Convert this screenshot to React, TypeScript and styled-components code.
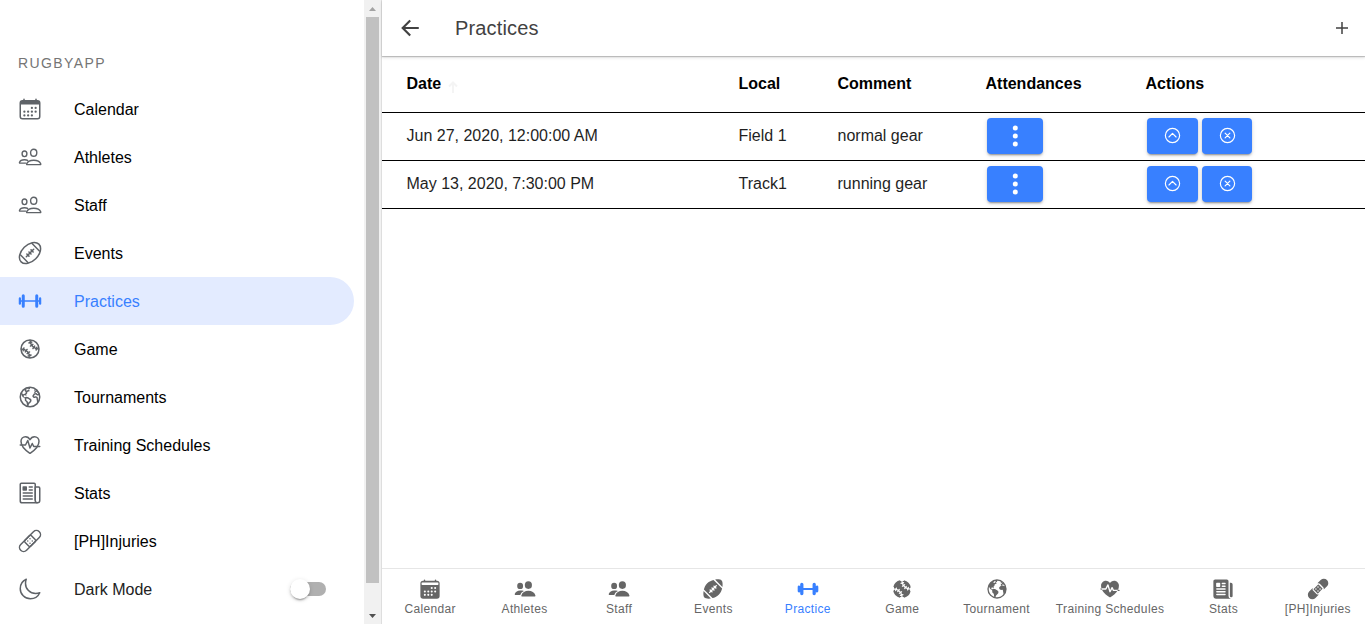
import React from 'react';
import styled, { createGlobalStyle } from 'styled-components';
import {
  IoAmericanFootballOutline, IoBarbellOutline, IoBaseballOutline,
  IoEarthOutline, IoFitnessOutline, IoNewspaperOutline, IoBandageOutline, IoMoonOutline,
  IoAmericanFootball, IoBarbell, IoBaseball, IoEarth, IoFitness, IoNewspaper, IoBandage,
  IoChevronUpCircleOutline, IoCloseCircleOutline,
} from 'react-icons/io5';

const BLUE = '#3880ff';

const GlobalStyle = createGlobalStyle`
  *, *::before, *::after { box-sizing: border-box; }
  body {
    margin: 0;
    background: #fff;
    color: #000;
    font-family: "Liberation Sans", Arial, sans-serif;
    font-size: 16px;
  }
`;

const Shell = styled.div`
  display: flex;
  height: 624px;
  overflow: hidden;
`;

const Sidebar = styled.aside`
  display: flex;
  width: 382px;
  flex: none;
  border-right: 1px solid #dedede;
`;

const Menu = styled.nav`
  flex: 1;
  padding: 40px 10px 0 0;
`;

const MenuHeader = styled.h1`
  margin: 0;
  height: 45px;
  padding-left: 18px;
  font-size: 14px;
  font-weight: 400;
  line-height: 46px;
  letter-spacing: 1.4px;
  color: #757575;
`;

const MenuItem = styled.a<{ $active?: boolean }>`
  display: flex;
  align-items: center;
  height: 48px;
  padding: 0 28px 0 18px;
  border-radius: 0 32px 32px 0;
  background: ${(p) => (p.$active ? '#e3ebff' : 'transparent')};
  color: ${(p) => (p.$active ? BLUE : '#000')};

  svg {
    flex: none;
    width: 24px;
    height: 24px;
    margin-right: 32px;
    color: ${(p) => (p.$active ? BLUE : '#5f6368')};
  }
`;

const ItemLabel = styled.span<{ $muted?: boolean }>`
  flex: 1;
  padding-top: 2px;
  line-height: 24px;
  color: ${(p) => (p.$muted ? '#222' : 'inherit')};
`;

const Toggle = styled.span`
  display: flex;
  align-items: center;
  width: 36px;
  height: 14px;
  border-radius: 14px;
  background: #b0b0b0;
`;

const Knob = styled.span`
  width: 20px;
  height: 20px;
  border-radius: 50%;
  background: #fff;
  box-shadow: 0 3px 1px -2px rgba(0, 0, 0, .2), 0 2px 2px 0 rgba(0, 0, 0, .14), 0 1px 5px 0 rgba(0, 0, 0, .12);
`;

const Scrollbar = styled.div`
  display: flex;
  flex-direction: column;
  align-items: center;
  width: 17px;
  background: #f1f1f1;
`;

const ScrollArrow = styled.span`
  display: flex;
  align-items: center;
  justify-content: center;
  width: 17px;
  height: 17px;
`;

const ScrollThumb = styled.span`
  width: 13px;
  height: 566px;
  margin-bottom: auto;
  background: #c1c1c1;
`;

const Page = styled.main`
  display: flex;
  flex: 1;
  flex-direction: column;
  min-width: 0;
`;

const Toolbar = styled.header`
  display: flex;
  align-items: center;
  flex: none;
  height: 56px;
  padding: 0 16px;
  color: #424242;
  box-shadow: 0 1px 1px rgba(0, 0, 0, .2), 0 2px 3px rgba(0, 0, 0, .1);
`;

const Title = styled.h2`
  flex: 1;
  margin: 0 0 0 33px;
  font-size: 20px;
  font-weight: 400;
  letter-spacing: .15px;
`;

const Content = styled.section`
  flex: 1;
`;

const Row = styled.div<{ $header?: boolean }>`
  display: grid;
  grid-template-columns: 332px 99px 148px 160px 1fr;
  height: ${(p) => (p.$header ? 57 : 48)}px;
  padding-left: 24.5px;
  border-bottom: 1px solid #000;
  font-weight: ${(p) => (p.$header ? 700 : 400)};
  color: ${(p) => (p.$header ? '#000' : '#1f1f1f')};
`;

const Cell = styled.div<{ $header?: boolean }>`
  display: flex;
  align-items: center;
  padding-bottom: ${(p) => (p.$header ? 0 : 2)}px;
  white-space: nowrap;
`;

const SortIcon = styled.svg`
  margin: 5px 0 0 7px;
`;

const ButtonCell = styled.div`
  display: flex;
  align-items: center;
  gap: 4px;
  padding: 0 0 2px 1.5px;
`;

const Button = styled.button<{ $width: number }>`
  display: flex;
  align-items: center;
  justify-content: center;
  width: ${(p) => p.$width}px;
  height: 36px;
  padding: 0;
  border: 0;
  border-radius: 4px;
  background: ${BLUE};
  color: #fff;
  box-shadow: 0 3px 1px -2px rgba(0, 0, 0, .2), 0 2px 2px 0 rgba(0, 0, 0, .14), 0 1px 5px 0 rgba(0, 0, 0, .12);
`;

const TabBar = styled.footer`
  display: flex;
  flex: none;
  height: 56px;
  padding-left: 1px;
  border-top: 1px solid #e6e6e6;
`;

const Tab = styled.a<{ $active?: boolean }>`
  display: flex;
  flex: 1;
  flex-direction: column;
  align-items: center;
  padding: 9px 12px 0;
  font-size: 12px;
  line-height: 14px;
  letter-spacing: .34px;
  white-space: nowrap;
  color: ${(p) => (p.$active ? BLUE : '#666')};

  svg {
    width: 22px;
    height: 22px;
    margin-bottom: 2px;
  }
`;

const calendarDots = [
  [296, 232], [376, 232],
  [136, 312], [216, 312], [296, 312], [376, 312],
  [136, 392], [216, 392], [296, 392],
];

const CalendarOutlineIcon = () => (
  <svg viewBox="0 0 512 512" fill="none" stroke="currentColor" strokeWidth="32" strokeLinecap="round">
    <rect x="48" y="80" width="416" height="384" rx="48" />
    <path d="M128 48v32M384 48v32" />
    <path d="M48 160v-32a48 48 0 0 1 48-48h320a48 48 0 0 1 48 48v32Z" fill="currentColor" stroke="none" />
    <g fill="currentColor" stroke="none">
      {calendarDots.map(([x, y]) => <circle key={`${x}-${y}`} cx={x} cy={y} r="24" />)}
    </g>
  </svg>
);

const CalendarIcon = () => (
  <svg viewBox="0 0 512 512" fill="currentColor">
    <rect x="32" y="64" width="448" height="416" rx="64" />
    <path d="M128 48v32M384 48v32" stroke="currentColor" strokeWidth="32" strokeLinecap="round" />
    <g fill="#fff">
      <rect x="60" y="104" width="392" height="56" rx="14" />
      {calendarDots.map(([x, y]) => <circle key={`${x}-${y}`} cx={x} cy={y} r="24" />)}
    </g>
  </svg>
);

const PeopleOutlineIcon = () => (
  <svg viewBox="0 0 24 24" fill="none" stroke="currentColor" strokeWidth="1.4" strokeLinejoin="round" strokeLinecap="round">
    <ellipse cx="15.7" cy="7.7" rx="3.1" ry="3.5" />
    <ellipse cx="6.5" cy="8.8" rx="2.4" ry="2.8" />
    <path d="M9.1 19.6C8.7 19.6 8.5 19.2 8.7 18.7C9.6 16.5 12.4 15.2 15.7 15.2S21.8 16.5 22.7 18.7C22.9 19.2 22.7 19.6 22.3 19.6Z" />
    <path d="M7.6 18.1H1.9C1.5 18.1 1.4 17.8 1.5 17.4C2.1 15.6 4.1 14.7 6.5 14.7C7.7 14.7 8.8 14.9 9.6 15.4" />
  </svg>
);

const PeopleIcon = () => (
  <svg viewBox="0 0 24 24" fill="currentColor">
    <ellipse cx="15.7" cy="7.7" rx="3.9" ry="4.2" />
    <ellipse cx="6.7" cy="8.6" rx="3.2" ry="3.5" />
    <path d="M9 20.3C8.2 20.3 7.8 19.6 8.1 18.7C9 15.9 12 14 15.7 14S22.4 15.9 23.3 18.7C23.6 19.6 23.2 20.3 22.4 20.3Z" />
    <path d="M10.9 14.1C8.9 15 7.4 16.4 6.9 18.6H1.7C1 18.6.6 18 .9 17.2C1.6 15 3.9 13.6 6.7 13.6C8.3 13.6 9.6 13.7 10.9 14.1Z" />
  </svg>
);

const menu: { label: string; icon: React.ComponentType }[] = [
  { label: 'Calendar', icon: CalendarOutlineIcon },
  { label: 'Athletes', icon: PeopleOutlineIcon },
  { label: 'Staff', icon: PeopleOutlineIcon },
  { label: 'Events', icon: IoAmericanFootballOutline },
  { label: 'Practices', icon: IoBarbellOutline },
  { label: 'Game', icon: IoBaseballOutline },
  { label: 'Tournaments', icon: IoEarthOutline },
  { label: 'Training Schedules', icon: IoFitnessOutline },
  { label: 'Stats', icon: IoNewspaperOutline },
  { label: '[PH]Injuries', icon: IoBandageOutline },
];

const tabs: { label: string; icon: React.ComponentType }[] = [
  { label: 'Calendar', icon: CalendarIcon },
  { label: 'Athletes', icon: PeopleIcon },
  { label: 'Staff', icon: PeopleIcon },
  { label: 'Events', icon: IoAmericanFootball },
  { label: 'Practice', icon: IoBarbell },
  { label: 'Game', icon: IoBaseball },
  { label: 'Tournament', icon: IoEarth },
  { label: 'Training Schedules', icon: IoFitness },
  { label: 'Stats', icon: IoNewspaper },
  { label: '[PH]Injuries', icon: IoBandage },
];

const practices = [
  { date: 'Jun 27, 2020, 12:00:00 AM', local: 'Field 1', comment: 'normal gear' },
  { date: 'May 13, 2020, 7:30:00 PM', local: 'Track1', comment: 'running gear' },
];

export default function App() {
  return (
    <>
      <GlobalStyle />
      <Shell>
        <Sidebar>
          <Menu>
            <MenuHeader>RUGBYAPP</MenuHeader>
            {menu.map(({ label, icon: Icon }) => (
              <MenuItem key={label} $active={label === 'Practices'}>
                <Icon />
                <ItemLabel>{label}</ItemLabel>
              </MenuItem>
            ))}
            <MenuItem>
              <IoMoonOutline />
              <ItemLabel $muted>Dark Mode</ItemLabel>
              <Toggle><Knob /></Toggle>
            </MenuItem>
          </Menu>
          <Scrollbar>
            <ScrollArrow>
              <svg width="7" height="4" viewBox="0 0 7 4"><path d="M0 4 3.5 0 7 4Z" fill="#a3a3a3" /></svg>
            </ScrollArrow>
            <ScrollThumb />
            <ScrollArrow>
              <svg width="7" height="4" viewBox="0 0 7 4"><path d="M0 0 3.5 4 7 0Z" fill="#505050" /></svg>
            </ScrollArrow>
          </Scrollbar>
        </Sidebar>
        <Page>
          <Toolbar>
            <svg width="24" height="24" viewBox="0 0 512 512" fill="none" stroke="currentColor" strokeWidth="46" strokeLinecap="square" strokeMiterlimit="10">
              <path d="M244 400 100 256l144-144M120 256h300" />
            </svg>
            <Title>Practices</Title>
            <svg width="14" height="14" viewBox="0 0 14 14" fill="none" stroke="#424242" strokeWidth="1.5">
              <path d="M7 1v12M1 7h12" />
            </svg>
          </Toolbar>
          <Content>
            <Row $header>
              <Cell $header>
                Date
                <SortIcon width="10" height="12" viewBox="0 0 10 12" fill="none" stroke="#f4f4f4" strokeWidth="2">
                  <path d="M5 12V1.5M1 5.5l4-4 4 4" />
                </SortIcon>
              </Cell>
              <Cell $header>Local</Cell>
              <Cell $header>Comment</Cell>
              <Cell $header>Attendances</Cell>
              <Cell $header>Actions</Cell>
            </Row>
            {practices.map((p) => (
              <Row key={p.date}>
                <Cell>{p.date}</Cell>
                <Cell>{p.local}</Cell>
                <Cell>{p.comment}</Cell>
                <ButtonCell>
                  <Button $width={56} aria-label="Attendances">
                    <svg width="6" height="22" viewBox="0 0 6 22" fill="currentColor">
                      <circle cx="3.3" cy="3" r="2.5" />
                      <circle cx="3.3" cy="11" r="2.5" />
                      <circle cx="3.3" cy="19" r="2.5" />
                    </svg>
                  </Button>
                </ButtonCell>
                <ButtonCell>
                  <Button $width={51} aria-label="Edit"><IoChevronUpCircleOutline size={19} /></Button>
                  <Button $width={50} aria-label="Delete"><IoCloseCircleOutline size={19} /></Button>
                </ButtonCell>
              </Row>
            ))}
          </Content>
          <TabBar>
            {tabs.map(({ label, icon: Icon }) => (
              <Tab key={label} $active={label === 'Practice'}>
                <Icon />
                {label}
              </Tab>
            ))}
          </TabBar>
        </Page>
      </Shell>
    </>
  );
}
